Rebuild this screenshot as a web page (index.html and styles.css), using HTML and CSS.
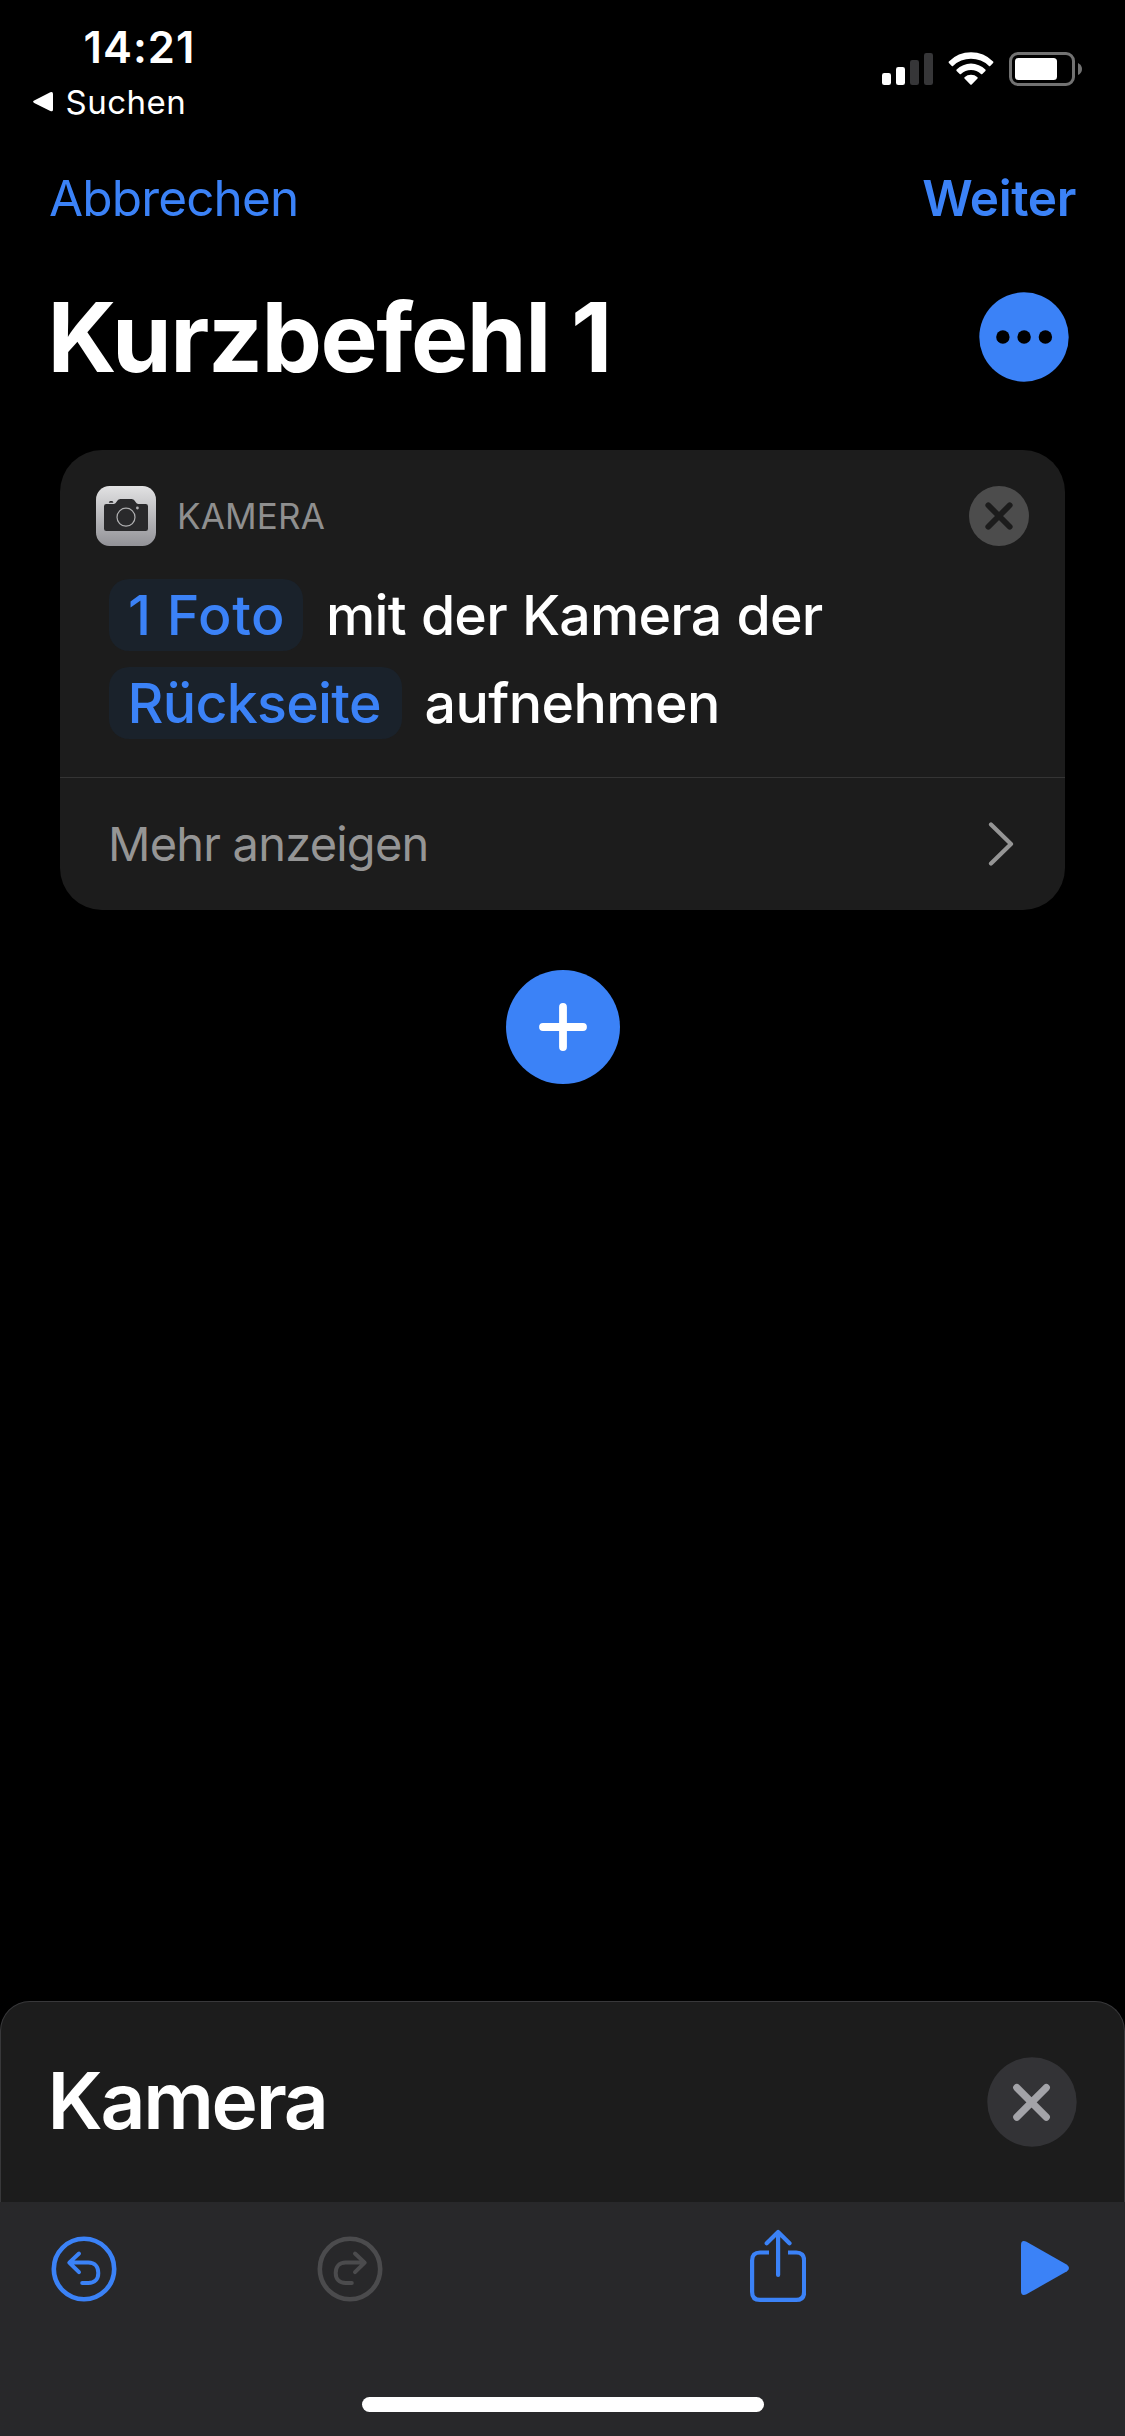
FILE: index.html
```
<!DOCTYPE html>
<html lang="de">
<head>
<meta charset="utf-8">
<title>Kurzbefehl 1</title>
<link rel="stylesheet" href="styles.css">
</head>
<body>
<div class="screen">
  <header class="status">
    <div class="status-left">
      <div class="time">14:21</div>
      <div class="back">
        <svg width="22" height="22" viewBox="0 0 22 22"><path d="M2.2 9.6 18.3 1.3Q21 0.2 21 3V18.4Q21 21.2 18.3 19.9L2.2 11.9Q0 10.7 2.2 9.6Z" fill="#fff"/></svg>
        <span>Suchen</span>
      </div>
    </div>
    <div class="status-icons">
      <svg width="51" height="34" viewBox="0 0 51 34">
        <g fill="#fff"><rect x="0" y="21" width="9" height="12" rx="2.3"/><rect x="14" y="15" width="9" height="18" rx="2.3"/></g>
        <g fill="#363638"><rect x="28" y="8" width="9" height="25" rx="2.3"/><rect x="42" y="1" width="9" height="32" rx="2.3"/></g>
      </svg>
      <svg width="46" height="34" viewBox="0 0 46 34">
        <path d="M0.9 9.6A30.6 30.6 0 0 1 45.1 9.6Q45.7 10.3 45.1 11L42.2 14Q41.6 14.5 41 13.9A26 26 0 0 0 5 13.9Q4.4 14.5 3.8 14L0.9 11Q0.3 10.3 0.9 9.6Z" fill="#fff"/>
        <path d="M8.6 17.5A20.5 20.5 0 0 1 37.4 17.5Q38 18.2 37.4 18.9L34.3 21.9Q33.7 22.4 33 21.9A14.5 14.5 0 0 0 13 21.9Q12.3 22.4 11.7 21.9L8.6 18.9Q8 18.2 8.6 17.5Z" fill="#fff"/>
        <path d="M16.5 25.3A9.8 9.8 0 0 1 29.5 25.3Q30 26 29.5 26.5L23.7 32.4Q23 33.1 22.3 32.4L16.5 26.5Q16 26 16.5 25.3Z" fill="#fff"/>
      </svg>
      <svg width="73" height="34" viewBox="0 0 73 34">
        <rect x="1.5" y="1.5" width="63" height="31" rx="7.5" fill="none" stroke="#727272" stroke-width="3"/>
        <rect x="6" y="6" width="42" height="22" rx="3.5" fill="#fff"/>
        <path d="M69 11Q73 13 73 17T69 23Z" fill="#727272"/>
      </svg>
    </div>
  </header>

  <nav class="nav">
    <a class="cancel">Abbrechen</a>
    <a class="next">Weiter</a>
  </nav>

  <div class="title-row">
    <h1>Kurzbefehl 1</h1>
    <svg width="90" height="90" viewBox="0 0 90 90"><circle cx="45" cy="45" r="44.7" fill="#3b82f7"/><g fill="#000"><circle cx="23.9" cy="45" r="6.7"/><circle cx="45.1" cy="45" r="6.7"/><circle cx="66.4" cy="45" r="6.7"/></g></svg>
  </div>

  <section class="card">
    <div class="card-head">
      <svg width="60" height="60" viewBox="0 0 60 60">
        <defs>
          <linearGradient id="plate" x1="0" y1="0" x2="0" y2="1"><stop offset="0" stop-color="#e2e2e3"/><stop offset="1" stop-color="#929297"/></linearGradient>
        </defs>
        <rect width="60" height="60" rx="13.5" fill="url(#plate)"/>
        <path d="M10.3 18H18Q19.6 17.8 20.6 15.8Q21.9 13 24.2 13H35.8Q38.1 13 39.4 15.8Q40.4 17.8 42 18H49.7Q52 18 52 20.3V42.7Q52 45 49.7 45H10.3Q8 45 8 42.7V20.3Q8 18 10.3 18Z" fill="#29292b"/>
        <path d="M12.8 16.8Q13 15 14.4 15H16Q17.2 15 17.4 16.8Z" fill="#29292b"/>
        <circle cx="30" cy="31.2" r="9" fill="none" stroke="#b0b0b2" stroke-width="1.2"/>
        <circle cx="41.4" cy="22" r="1.4" fill="#b0b0b2"/>
      </svg>
      <span class="app">KAMERA</span>
      <svg width="60" height="60" viewBox="0 0 60 60"><circle cx="30" cy="30" r="30" fill="#4c4c4c"/><path d="M19.3 19.3 40.7 40.7M40.7 19.3 19.3 40.7" stroke="#1c1c1c" stroke-width="5.8" stroke-linecap="round"/></svg>
    </div>
    <div class="action">
      <div class="line"><span class="chip chip-count">1 Foto</span><span class="words">mit der Kamera der</span></div>
      <div class="line"><span class="chip chip-side">Rückseite</span><span class="words words-end">aufnehmen</span></div>
    </div>
    <div class="more">
      <span>Mehr anzeigen</span>
      <svg width="26" height="44" viewBox="0 0 26 44"><path d="M3 2.5 23 22 3 41.5" fill="none" stroke="#959595" stroke-width="4.2" stroke-linecap="round" stroke-linejoin="round"/></svg>
    </div>
  </section>

  <svg class="add" width="114" height="114" viewBox="0 0 114 114"><circle cx="57" cy="57" r="57" fill="#3b82f7"/><path d="M57 37V77M37 57H77" stroke="#fff" stroke-width="7.8" stroke-linecap="round"/></svg>

  <section class="sheet">
    <h2>Kamera</h2>
    <svg width="90" height="90" viewBox="0 0 90 90"><circle cx="45" cy="45" r="44.7" fill="#333336"/><path d="M29.8 30.6 59.3 60.1M59.3 30.6 29.8 60.1" stroke="#a3a3a8" stroke-width="7.2" stroke-linecap="round"/></svg>
  </section>

  <footer class="toolbar">
    <div class="tools">
      <svg width="66" height="66" viewBox="0 0 66 66" fill="none" stroke="#3b82f7" stroke-linecap="round" stroke-linejoin="round"><circle cx="33" cy="33" r="30.2" stroke-width="4.6"/><path d="M28 17.5 18.3 26.6 28 36.2M18.5 26.6H37.3C44 26.6 47.3 31.2 47.3 37S44 47 37.3 47H31.2" stroke-width="4"/></svg>
      <svg class="redo" width="66" height="66" viewBox="0 0 66 66" fill="none" stroke="#4b4b4d" stroke-linecap="round" stroke-linejoin="round"><circle cx="33" cy="33" r="30.2" stroke-width="4.6"/><path d="M38 17.5 47.7 26.6 38 36.2M47.5 26.6H28.7C22 26.6 18.7 31.2 18.7 37S22 47 28.7 47H34.8" stroke-width="4"/></svg>
      <svg class="share" width="56" height="74" viewBox="0 0 56 74" fill="none" stroke="#3b82f7" stroke-width="4.2"><path d="M19 23.5H10Q2.1 23.5 2.1 31.4V63Q2.1 70.9 10 70.9H46.2Q54.1 70.9 54.1 63V31.4Q54.1 23.5 46.2 23.5H38"/><path d="M28.1 46V3.5M16.7 14.2 28.1 2.9 39.5 14.2" stroke-linecap="round" stroke-linejoin="round"/></svg>
      <svg class="play" width="48" height="54" viewBox="0 0 48 54"><path d="M0 4Q0 -1.5 5.5 0.8L46 23.7Q50 27 46 30.3L5.5 53.2Q0 55.5 0 50Z" fill="#3b82f7"/></svg>
    </div>
    <div class="home"></div>
  </footer>
</div>
</body>
</html>
```
FILE: styles.css
```
* { box-sizing: border-box; }
body {
  margin: 0;
  background: #000;
  color: #fff;
  font-family: Inter, "Liberation Sans", sans-serif;
}
svg { display: block; flex: none; }
h1, h2 { margin: 0; }
.screen {
  width: 1125px;
  height: 2436px;
  display: flex;
  flex-direction: column;
  background: #000;
  overflow: hidden;
  white-space: nowrap;
}

.status {
  height: 130px;
  padding: 20px 43px 0 32px;
  display: flex;
  justify-content: space-between;
}
.time {
  padding-left: 51.5px;
  font-size: 43.5px;
  font-weight: 600;
  line-height: 54px;
  letter-spacing: 1.04px;
}
.back {
  display: flex;
  align-items: center;
  gap: 11.5px;
  font-size: 33px;
  line-height: 56px;
  letter-spacing: .5px;
}
.status-icons {
  display: flex;
  gap: 15px;
  padding-top: 32px;
}

.nav {
  height: 136px;
  padding: 0 49px 0 49px;
  display: flex;
  align-items: center;
  justify-content: space-between;
  color: #3b82f7;
  font-size: 49.5px;
}
.cancel { letter-spacing: -.86px; }
.next { font-weight: 600; letter-spacing: -.4px; }

.title-row {
  height: 142px;
  padding: 0 56px 0 47.5px;
  display: flex;
  align-items: center;
  justify-content: space-between;
}
.title-row h1 {
  font-size: 96px;
  font-weight: 700;
  letter-spacing: -1.42px;
}

.card {
  margin: 42px 60px 0;
  border-radius: 42px;
  background: #1c1c1c;
}
.card-head {
  padding: 36px 36px 0;
  display: flex;
  align-items: center;
}
.app {
  flex: 1;
  margin-left: 21px;
  color: #8f8f8f;
  font-size: 35px;
  letter-spacing: .18px;
}
.action {
  padding: 33px 49px 38px;
  display: flex;
  flex-direction: column;
  gap: 16px;
  font-size: 55.5px;
  font-weight: 500;
  line-height: 72px;
}
.line { display: flex; }
.chip {
  border-radius: 20px;
  background: #1a222b;
  color: #3b82f7;
}
.chip-count { width: 194px; padding-left: 19px; letter-spacing: .52px; }
.chip-side { width: 293px; padding-left: 18.5px; letter-spacing: -.72px; }
.words { margin-left: 23px; letter-spacing: -.82px; word-spacing: 1.2px; }
.words-end { margin-left: 22.5px; letter-spacing: -.6px; }
.more {
  height: 133px;
  padding: 0 51px 1px 48px;
  border-top: 1px solid #343434;
  display: flex;
  align-items: center;
  justify-content: space-between;
  color: #959595;
  font-size: 47px;
  letter-spacing: -.79px;
}

.add { margin: 60px 0 0 506px; }

.sheet {
  height: 201px;
  margin-top: auto;
  padding: 0 47px 0 46.5px;
  border: 1px solid #38383a;
  border-bottom: 0;
  border-radius: 30px 30px 0 0;
  background: #1c1c1c;
  display: flex;
  align-items: center;
  justify-content: space-between;
}
.sheet h2 {
  padding-bottom: 3px;
  font-size: 78.5px;
  font-weight: 600;
  letter-spacing: -2.3px;
}

.toolbar {
  height: 234px;
  background: #28282a;
}
.tools {
  height: 134px;
  padding: 0 56px 0 51px;
  display: flex;
  align-items: center;
}
.redo { margin-left: 200px; }
.share { margin: -6px 0 0 367px; }
.play { margin: -2px 0 0 auto; }
.home {
  width: 402px;
  height: 15px;
  margin: 61px auto 0;
  border-radius: 8px;
  background: #fff;
}
```
